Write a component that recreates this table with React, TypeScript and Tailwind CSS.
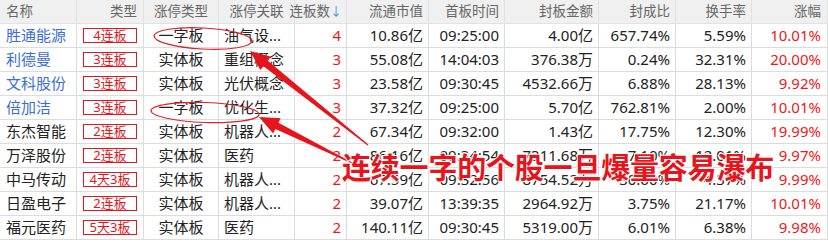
import React from 'react';

type Row = {
  name: string;
  blue: boolean;
  badge: string;
  kind: string;
  topic: string;
  count: string;
  cap: string;
  time: string;
  amount: string;
  ratio: string;
  turnover: string;
  change: string;
};

const rows: Row[] = [
  { name: '胜通能源', blue: true, badge: '4连板', kind: '一字板', topic: '油气设...', count: '4', cap: '10.86亿', time: '09:25:00', amount: '4.00亿', ratio: '657.74%', turnover: '5.59%', change: '10.01%' },
  { name: '利德曼', blue: true, badge: '3连板', kind: '实体板', topic: '重组概念', count: '3', cap: '55.08亿', time: '14:04:03', amount: '376.38万', ratio: '0.24%', turnover: '32.31%', change: '20.00%' },
  { name: '文科股份', blue: true, badge: '3连板', kind: '实体板', topic: '光伏概念', count: '3', cap: '23.58亿', time: '09:30:45', amount: '4532.66万', ratio: '6.88%', turnover: '28.13%', change: '9.92%' },
  { name: '倍加洁', blue: true, badge: '3连板', kind: '一字板', topic: '优化生...', count: '3', cap: '37.32亿', time: '09:25:00', amount: '5.70亿', ratio: '762.81%', turnover: '2.00%', change: '10.01%' },
  { name: '东杰智能', blue: false, badge: '2连板', kind: '实体板', topic: '机器人...', count: '2', cap: '67.34亿', time: '09:32:00', amount: '1.43亿', ratio: '17.75%', turnover: '12.30%', change: '19.99%' },
  { name: '万泽股份', blue: false, badge: '2连板', kind: '实体板', topic: '医药', count: '2', cap: '86.16亿', time: '09:34:54', amount: '7311.68万', ratio: '7.10%', turnover: '12.01%', change: '9.97%' },
  { name: '中马传动', blue: false, badge: '4天3板', kind: '实体板', topic: '机器人...', count: '2', cap: '67.59亿', time: '09:32:56', amount: '8754.52万', ratio: '30.60%', turnover: '4.37%', change: '9.99%' },
  { name: '日盈电子', blue: false, badge: '2连板', kind: '实体板', topic: '机器人...', count: '2', cap: '39.07亿', time: '13:39:35', amount: '2964.92万', ratio: '3.75%', turnover: '21.17%', change: '10.01%' },
  { name: '福元医药', blue: false, badge: '5天3板', kind: '实体板', topic: '医药', count: '2', cap: '140.11亿', time: '09:30:45', amount: '5319.00万', ratio: '6.01%', turnover: '6.38%', change: '9.98%' },
];

const cols = 'grid grid-cols-[77px_67px_75px_76px_52px_82px_76px_94px_77px_76px_76px]';
const cell = 'flex h-6 items-center border-r border-b border-[#dcdcdc] whitespace-nowrap overflow-hidden';
const head = 'flex h-6 items-center whitespace-nowrap border-r border-b border-[#e2e2e2] text-[13.5px] text-[#666]';

// tapered annotation arrow, thin at the tail and wide at the head
function arrow(tx: number, ty: number, hx: number, hy: number) {
  const dx = hx - tx;
  const dy = hy - ty;
  const len = Math.hypot(dx, dy);
  const ux = dx / len;
  const uy = dy / len;
  const px = -uy;
  const py = ux;
  const bx = hx - ux * 20;
  const by = hy - uy * 20;
  const pts: [number, number][] = [
    [tx + px * 0.6, ty + py * 0.6],
    [bx + px * 3.5, by + py * 3.5],
    [bx + px * 8.5, by + py * 8.5],
    [hx, hy],
    [bx - px * 8.5, by - py * 8.5],
    [bx - px * 3.5, by - py * 3.5],
    [tx - px * 0.6, ty - py * 0.6],
  ];
  return pts.map((p) => p.join(',')).join(' ');
}

export default function App() {
  return (
    <div className="relative h-[243px] w-[828px] overflow-hidden bg-white text-[15px] text-[#222] [font-family:'Noto_Sans','Noto_Sans_CJK_SC',sans-serif]">
      <div className={`${cols} bg-[#f0f0f0]`}>
        <div className={`${head} pl-[6px]`}>名称</div>
        <div className={`${head} justify-end pr-[6px]`}>类型</div>
        <div className={`${head} justify-center`}>涨停类型</div>
        <div className={`${head} justify-center`}>涨停关联</div>
        <div className={`${head} justify-end pr-[4px] text-[12px] text-[#222]`}>
          连板数<span className="text-[12px] text-[#3a8ee6]">↓</span>
        </div>
        <div className={`${head} justify-end pr-[5px]`}>流通市值</div>
        <div className={`${head} justify-end pr-[5px]`}>首板时间</div>
        <div className={`${head} justify-end pr-[5px]`}>封板金额</div>
        <div className={`${head} justify-end pr-[5px]`}>封成比</div>
        <div className={`${head} justify-end pr-[5px]`}>换手率</div>
        <div className={`${head} justify-end pr-[6px]`}>涨幅</div>
      </div>

      {rows.map((r) => (
        <div key={r.name} className={cols}>
          <div className={`${cell} pl-[6px] ${r.blue ? 'text-[#3b6ed8]' : ''}`}>{r.name}</div>
          <div className={`${cell} justify-center`}>
            <span className="flex h-[15px] w-[54px] items-center justify-center border border-[#e8161c] text-[13px] text-[#e8161c]">
              {r.badge}
            </span>
          </div>
          <div className={`${cell} justify-center`}>{r.kind}</div>
          <div className={`${cell} pl-[5px]`}>{r.topic}</div>
          <div className={`${cell} justify-end pr-[5px] text-[#f01818]`}>{r.count}</div>
          <div className={`${cell} justify-end pr-[5px]`}>{r.cap}</div>
          <div className={`${cell} justify-end pr-[5px]`}>{r.time}</div>
          <div className={`${cell} justify-end pr-[5px]`}>{r.amount}</div>
          <div className={`${cell} justify-end pr-[5px]`}>{r.ratio}</div>
          <div className={`${cell} justify-end pr-[5px]`}>{r.turnover}</div>
          <div className={`${cell} justify-end pr-[6px] text-[#f01818]`}>{r.change}</div>
        </div>
      ))}

      <svg className="pointer-events-none absolute left-0 top-0" width="828" height="243" viewBox="0 0 828 243">
        <ellipse cx="203" cy="38.5" rx="49" ry="10.5" fill="none" stroke="#e0202a" strokeWidth="1.2" transform="rotate(3 203 38.5)" />
        <ellipse cx="205" cy="112.5" rx="54" ry="10" fill="none" stroke="#e0202a" strokeWidth="1.2" transform="rotate(2 205 112.5)" />
        <polygon points={arrow(368, 145, 250, 51)} fill="#e8141c" />
        <polygon points={arrow(352, 163, 259, 117)} fill="#e8141c" />
      </svg>

      <div className="absolute left-[342px] top-[152px] text-[29px] font-bold leading-none tracking-[-0.2px] text-[#e8141c] [-webkit-text-stroke:2px_white] [paint-order:stroke_fill] [font-family:'Noto_Sans_CJK_SC',sans-serif]">
        连续一字的个股一旦爆量容易瀑布
      </div>
    </div>
  );
}
